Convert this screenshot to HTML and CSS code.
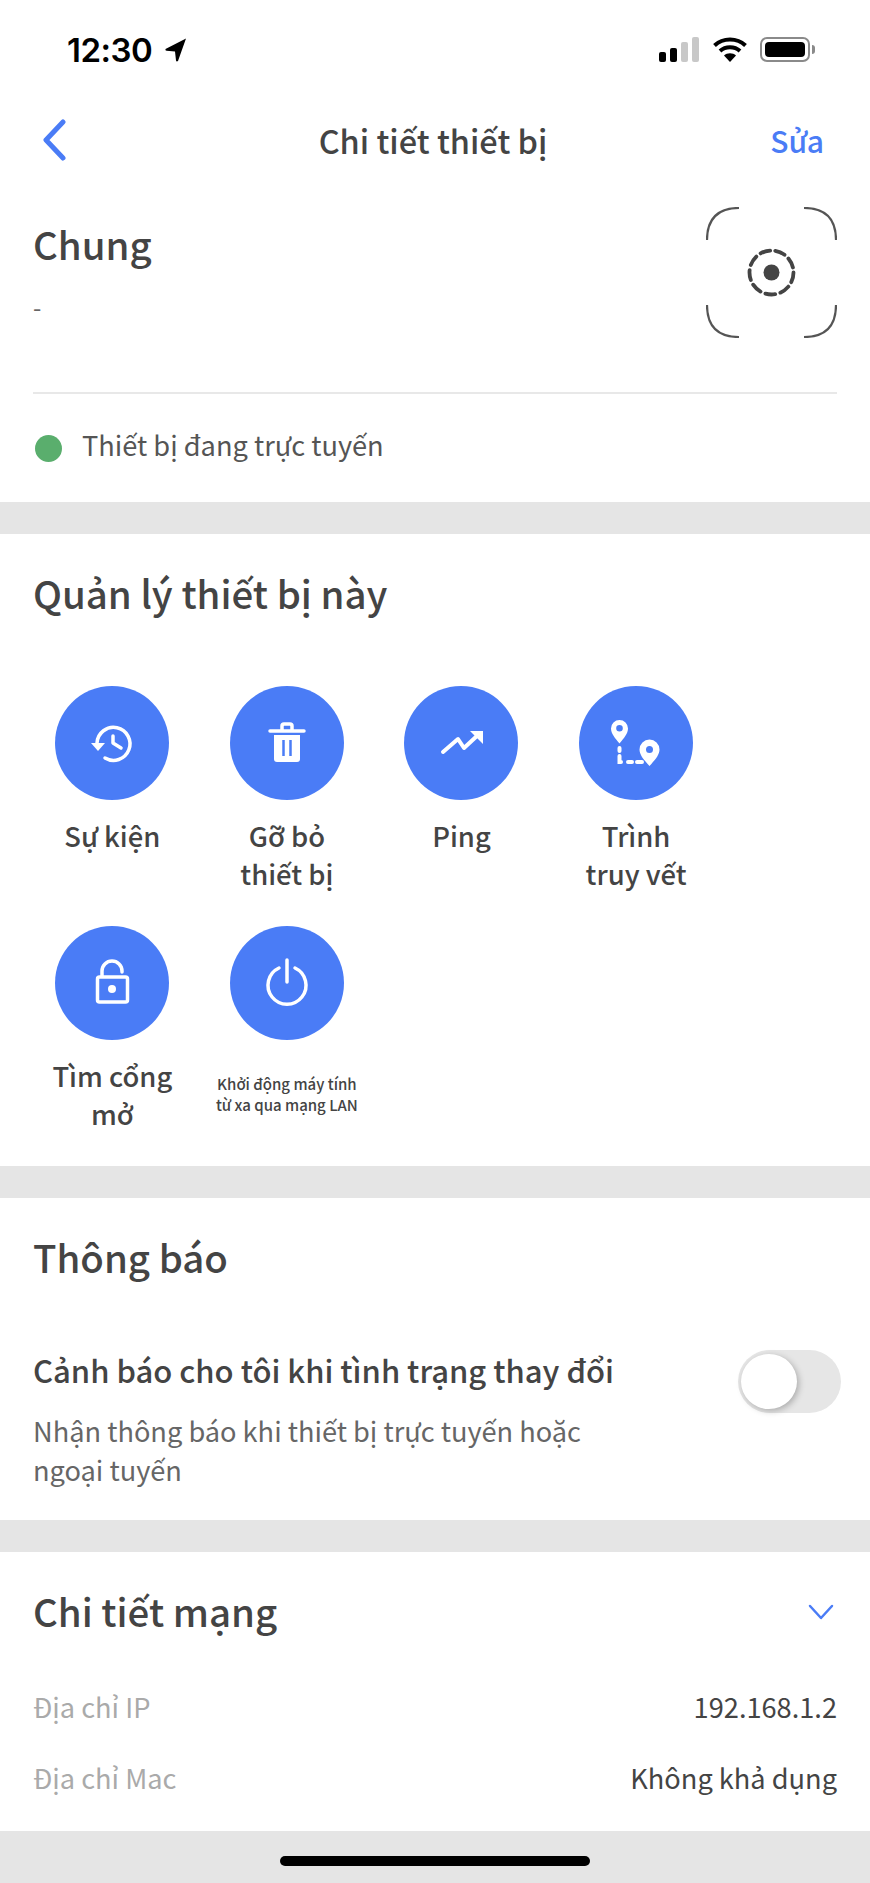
FILE: index.html
```html
<!DOCTYPE html>
<html lang="vi">

<head>
    <meta charset="UTF-8">
    <meta name="viewport" content="width=device-width, initial-scale=1.0">
    <title>Chi tiết thiết bị</title>
    <link rel="stylesheet" href="styles.css">
</head>

<body>
    <div class="status-bar">
        <div class="status-time">
            <span>12:30</span>
            <svg class="status-arrow" width="22" height="24" viewBox="0 0 22 24">
                <path d="M21 0.5 L0.5 11 Q0 12.5 1.5 12.8 L10 13.5 L11 22.5 Q11.5 24 13 23 Z" />
            </svg>
        </div>
        <div class="status-icons">
            <div class="signal">
                <i class="bar bar-1"></i>
                <i class="bar bar-2"></i>
                <i class="bar bar-3 off"></i>
                <i class="bar bar-4 off"></i>
            </div>
            <svg class="wifi" width="34" height="25" viewBox="0 0 34 25" fill="none" stroke="#000" stroke-width="4">
                <path d="M1.5 8.5 C10 0.5 24 0.5 32.5 8.5" />
                <path d="M7 14 C12.5 9 21.500 9 27 14" />
                <path d="M17 25 L11 18.500 C14 15.500 20 15.500 23 18.500 Z" fill="#000" stroke="none" />
            </svg>
            <div class="battery"><i></i></div>
            <i class="battery-nub"></i>
        </div>
    </div>

    <header class="nav">
        <svg class="nav-back" width="24" height="42" viewBox="0 0 24 42" fill="none" stroke="#4a7cf6" stroke-width="5"
            stroke-linecap="round" stroke-linejoin="round">
            <path d="M21 3 L4 21 L21 39" />
        </svg>
        <h1>Chi tiết thiết bị</h1>
        <a class="nav-edit" href="#">Sửa</a>
    </header>

    <section class="card card-general">
        <div class="general-top">
            <div>
                <h2>Chung</h2>
                <p class="general-sub">-</p>
            </div>
            <svg class="scan-icon" width="131" height="131" viewBox="0 0 131 131" fill="none" stroke="#555"
                stroke-width="2.200">
                <path d="M1 33 C1 12 12 1 33 1" />
                <path d="M98 1 C119 1 130 12 130 33" />
                <path d="M1 98 C1 119 12 130 33 130" />
                <path d="M98 130 C119 130 130 119 130 98" />
                <circle cx="65.500" cy="65.500" r="22" stroke="#444" stroke-width="3.800" stroke-dasharray="10 5.270"
                    stroke-linecap="round" />
                <circle cx="65.500" cy="65.500" r="8" fill="#444" stroke="none" />
            </svg>
        </div>
        <div class="online-row">
            <i class="online-dot"></i>
            <span>Thiết bị đang trực tuyến</span>
        </div>
    </section>

    <section class="card card-manage">
        <h2>Quản lý thiết bị này</h2>
        <div class="actions">
            <div class="action">
                <svg class="action-icon" viewBox="0 0 114 114" fill="none" stroke="#fff" stroke-width="3.500"
                    stroke-linecap="round" stroke-linejoin="round">
                    <path d="M42 57 A16.500 16.500 0 1 1 50 72" />
                    <path d="M36 57 H50 L43 65 Z" fill="#fff" stroke="none" />
                    <path d="M58 50 V57 L66 62" />
                </svg>
                <div class="action-label">Sự kiện</div>
            </div>
            <div class="action">
                <svg class="action-icon" viewBox="0 0 114 114" fill="none" stroke="#fff" stroke-width="3.500"
                    stroke-linecap="round" stroke-linejoin="round">
                    <path d="M40 45 H74" />
                    <path d="M52 44 V40 Q52 38 54 38 H60 Q62 38 62 40 V44" />
                    <path d="M44 49 H70 V73 Q70 76 67 76 H47 Q44 76 44 73 Z" fill="#fff" stroke="none" />
                    <path d="M53.500 54 V70 M60.500 54 V70" stroke="#4a7cf6" stroke-width="2.500" stroke-linecap="butt" />
                </svg>
                <div class="action-label">Gỡ bỏ<br>thiết bị</div>
            </div>
            <div class="action">
                <svg class="action-icon" viewBox="0 0 114 114" fill="none" stroke="#fff" stroke-width="4"
                    stroke-linecap="round" stroke-linejoin="round">
                    <path d="M39 66 L54 53 L60 62 L74 49" />
                    <path d="M66 45 H79 V58 Z" fill="#fff" stroke="none" />
                </svg>
                <div class="action-label">Ping</div>
            </div>
            <div class="action">
                <svg class="action-icon" viewBox="0 0 114 114" fill="none" stroke="#fff" stroke-width="4"
                    stroke-linecap="round">
                    <path
                        d="M40.500 57.500 C36 52 32 47.500 32 42.500 A8.500 8.500 0 0 1 49 42.500 C49 47.500 45 52 40.500 57.500 Z M40.500 39 A3.300 3.300 0 1 0 40.500 45.600 A3.300 3.300 0 1 0 40.500 39 Z"
                        fill="#fff" fill-rule="evenodd" stroke="none" />
                    <path
                        d="M70.500 80 C65 74 60.500 69 60.500 63.500 A10 10 0 0 1 80.500 63.500 C80.500 69 76 74 70.500 80 Z M70.500 60 A3.500 3.500 0 1 0 70.500 67 A3.500 3.500 0 1 0 70.500 60 Z"
                        fill="#fff" fill-rule="evenodd" stroke="none" />
                    <path d="M40.500 62 V65 M40.500 70 V76 H42 M49 76 H53 M58 76 H63" />
                </svg>
                <div class="action-label">Trình<br>truy vết</div>
            </div>
            <div class="action">
                <svg class="action-icon" viewBox="0 0 114 114" fill="none" stroke="#fff" stroke-width="3.500"
                    stroke-linecap="round" stroke-linejoin="round">
                    <rect x="42.500" y="51" width="30" height="25" rx="2" />
                    <path d="M47 50 V45 A10 10 0 0 1 67 45 V46" />
                    <circle cx="57" cy="63" r="4" fill="#fff" stroke="none" />
                </svg>
                <div class="action-label">Tìm cổng<br>mở</div>
            </div>
            <div class="action">
                <svg class="action-icon" viewBox="0 0 114 114" fill="none" stroke="#fff" stroke-width="3.500"
                    stroke-linecap="round">
                    <path d="M49 42 A19 19 0 1 0 65 42" />
                    <path d="M57 34 V56" />
                </svg>
                <div class="action-label action-label-small">Khởi động máy tính<br>từ xa qua mạng LAN</div>
            </div>
        </div>
    </section>

    <section class="card card-notify">
        <h2>Thông báo</h2>
        <div class="notify-row">
            <div class="notify-text">
                <div class="notify-title">Cảnh báo cho tôi khi tình trạng thay đổi</div>
                <p class="notify-desc">Nhận thông báo khi thiết bị trực tuyến hoặc ngoại tuyến</p>
            </div>
            <div class="toggle"><i></i></div>
        </div>
    </section>

    <section class="card card-network">
        <div class="network-head">
            <h2>Chi tiết mạng</h2>
            <svg class="network-chevron" width="26" height="16" viewBox="0 0 26 16" fill="none" stroke="#4a7cf6"
                stroke-width="2.500" stroke-linecap="round" stroke-linejoin="round">
                <path d="M2 2 L13 14 L24 2" />
            </svg>
        </div>
        <div class="info-row info-row-first">
            <span class="info-key">Địa chỉ IP</span>
            <span class="info-value">192.168.1.2</span>
        </div>
        <div class="info-row">
            <span class="info-key">Địa chỉ Mac</span>
            <span class="info-value">Không khả dụng</span>
        </div>
    </section>

    <div class="home-area"><i class="home-bar"></i></div>
</body>

</html>
```

FILE: styles.css
```css
* {
    margin: 0;
    padding: 0;
    box-sizing: border-box;
}

body {
    width: 870px;
    height: 1883px;
    overflow: hidden;
    background-color: #e5e5e5;
    color: #444;
    font-family: "Noto Sans CJK SC", "Noto Sans", sans-serif;
}

i {
    display: block;
}

/* thanh trang thai */
.status-bar {
    height: 100px;
    background-color: #fff;
    display: flex;
    justify-content: space-between;
    align-items: flex-start;
    padding: 37px 55px 0 67px;
}

.status-time {
    display: flex;
    align-items: center;
    gap: 13px;
    height: 25px;
    font-family: Inter, "Liberation Sans", sans-serif;
    font-size: 33px;
    font-weight: 600;
    letter-spacing: -0.5px;
    color: #000;
}

.status-icons {
    display: flex;
    align-items: flex-start;
    height: 25px;
}

.signal {
    display: flex;
    align-items: flex-end;
    gap: 4px;
    height: 25px;
    margin-right: 14px;
}

.bar {
    width: 7px;
    border-radius: 2px;
    background-color: #000;
}

.bar.off {
    background-color: #c8c8c8;
}

.bar-1 {
    height: 10px;
}

.bar-2 {
    height: 14px;
}

.bar-3 {
    height: 20px;
}

.bar-4 {
    height: 25px;
}

.wifi {
    margin-right: 13px;
}

.battery {
    width: 50px;
    height: 25px;
    padding: 3px;
    border: 2px solid #8a8a8a;
    border-radius: 7px;
}

.battery i {
    height: 100%;
    background-color: #000;
    border-radius: 4px;
}

.battery-nub {
    width: 3px;
    height: 9px;
    margin: 8px 0 0 2px;
    background-color: #8a8a8a;
    border-radius: 0 3px 3px 0;
}

/* thanh dieu huong */
.nav {
    height: 80px;
    background-color: #fff;
    display: grid;
    grid-template-columns: 1fr auto 1fr;
    align-items: center;
    padding: 0 46px 0 42px;
}

.nav h1 {
    font-size: 32.5px;
    font-weight: 500;
    line-height: 44px;
}

.nav-edit {
    justify-self: end;
    font-size: 30px;
    font-weight: 500;
    line-height: 44px;
    color: #4a7cf6;
    text-decoration: none;
}

/* khoi trang */
.card {
    background-color: #fff;
    margin-bottom: 32px;
    padding: 0 33px;
}

.card h2 {
    font-size: 38.4px;
    font-weight: 500;
    line-height: 52px;
}

.card-general {
    height: 322px;
}

.general-top {
    display: flex;
    justify-content: space-between;
    align-items: flex-start;
    padding-top: 27px;
    height: 214px;
    border-bottom: 2px solid #e8e8e8;
}

.general-top h2 {
    margin-top: 10px;
}

.general-sub {
    margin-top: 22px;
    font-size: 24px;
    line-height: 32px;
    color: #666;
}

.scan-icon {
    flex: none;
}

.online-row {
    display: flex;
    align-items: center;
    gap: 20px;
    padding: 0 0 0 2px;
    height: 106px;
    font-size: 27.2px;
    color: #555;
}

.online-row span {
    margin-top: -6px;
}

.online-dot {
    width: 27px;
    height: 27px;
    margin-top: 2px;
    border-radius: 50%;
    background-color: #5aae6d;
}

.card-manage {
    height: 632px;
    padding: 32px 0 0;
}

.card-manage h2 {
    padding-left: 33px;
}

.actions {
    display: grid;
    grid-template-columns: repeat(4, 174.6px);
    grid-auto-rows: 240px;
    margin: 68px 0 0 25px;
}

.action {
    display: flex;
    flex-direction: column;
    align-items: center;
}

.action-icon {
    width: 114px;
    height: 114px;
    flex: none;
    background-color: #4a7cf6;
    border-radius: 50%;
}

.action-label {
    margin-top: 16px;
    font-size: 27.4px;
    font-weight: 500;
    line-height: 38px;
    text-align: center;
}

.action-label-small {
    margin-top: 33px;
    font-size: 15px;
    line-height: 21px;
}

.card-notify {
    height: 322px;
    padding-top: 32px;
}

.notify-row {
    display: flex;
    justify-content: space-between;
    align-items: flex-start;
    margin-top: 67px;
}

.notify-text {
    width: 600px;
}

.notify-title {
    font-size: 31px;
    font-weight: 500;
    line-height: 42px;
}

.notify-desc {
    width: 560px;
    margin-top: 20px;
    font-size: 27.2px;
    line-height: 38.5px;
    color: #666;
}

.toggle {
    position: relative;
    flex: none;
    width: 103px;
    height: 63px;
    margin: 1px -4px 0 0;
    border-radius: 32px;
    background-color: #e6e6e6;
}

/* nut gat nam de len nen */
.toggle i {
    position: absolute;
    left: 3px;
    top: 4px;
    width: 56px;
    height: 55px;
    border-radius: 50%;
    background-color: #fff;
    box-shadow: 2px 2px 6px rgba(0, 0, 0, 0.25);
}

.card-network {
    height: 279px;
    padding-top: 32px;
    margin-bottom: 0;
}

.network-head {
    display: flex;
    justify-content: space-between;
    align-items: center;
    padding-right: 3px;
}

.network-chevron {
    margin-top: 4px;
}

.info-row {
    display: flex;
    justify-content: space-between;
    margin-top: 31px;
    font-size: 27.2px;
    line-height: 40px;
}

.info-row-first {
    margin-top: 50px;
}

.info-key {
    color: #aaa;
}

.info-value {
    color: #444;
}

.home-area {
    height: 52px;
    padding-top: 25px;
}

.home-bar {
    width: 310px;
    height: 10px;
    margin: 0 auto;
    border-radius: 5px;
    background-color: #000;
}
```
